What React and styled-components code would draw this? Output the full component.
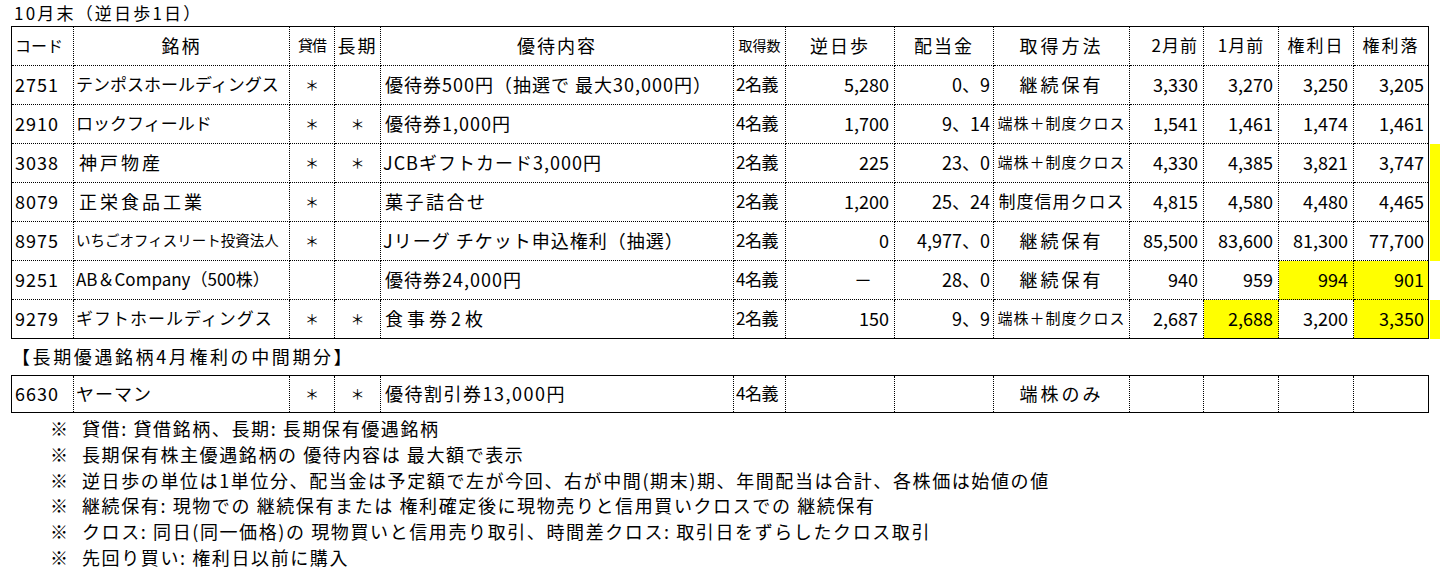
import React from "react";
import styled, { createGlobalStyle } from "styled-components";

const GlobalStyle = createGlobalStyle`
  body {
    margin: 0;
    background: #fff;
    color: #000;
    font-family: "Noto Sans CJK JP", "Noto Sans", sans-serif;
  }
`;

const YELLOW = "#ffff00";

// column widths measured from the sheet (incl. the dotted right border)
const cols = [
  { w: 62, a: "left", fs: 18, ls: 1, pl: 3 },
  { w: 216, a: "left", fs: 17, ls: 0, pl: 2 },
  { w: 45, a: "center", fs: 14, ls: 0 },
  { w: 46, a: "center", fs: 14, ls: 0 },
  { w: 353, a: "left", fs: 18, ls: 1, pl: 4 },
  { w: 52, a: "left", fs: 17, ls: -0.5, pl: 2 },
  { w: 109, a: "right", fs: 18, ls: 0, pr: 5 },
  { w: 99, a: "right", fs: 18, ls: 0, pr: 3 },
  { w: 136, a: "center", fs: 18, ls: 3 },
  { w: 74, a: "right", fs: 18, ls: 0, pr: 5 },
  { w: 75, a: "right", fs: 18, ls: 0, pr: 5 },
  { w: 75, a: "right", fs: 18, ls: 0, pr: 5 },
  { w: 74, a: "right", fs: 18, ls: 0, pr: 4 },
];

const header = [
  { t: "コード", fs: 16, ls: 0 },
  { t: "銘柄", a: "center", fs: 18, ls: 2 },
  { t: "貸借", fs: 15, ls: -1 },
  { t: "長期", fs: 18, ls: 2 },
  { t: "優待内容", a: "center", fs: 18, ls: 2 },
  { t: "取得数", fs: 14, ls: 0 },
  { t: "逆日歩", a: "center", fs: 18, ls: 2 },
  { t: "配当金", a: "center", fs: 18, ls: 2 },
  { t: "取得方法", fs: 18, ls: 3 },
  { t: "2月前", fs: 17, ls: 1 },
  { t: "1月前", a: "center", fs: 17, ls: 1 },
  { t: "権利日", a: "center", fs: 17, ls: 2 },
  { t: "権利落", a: "center", fs: 17, ls: 2 },
];

const cross = { t: "端株＋制度クロス", fs: 15, ls: 1 };
const keep = "継続保有";
const y = (t) => ({ t, bg: YELLOW });

const rows = [
  {
    side: false,
    cells: ["2751", "テンポスホールディングス", "＊", "", "優待券500円（抽選で 最大30,000円）", "2名義", "5,280", "0、9", keep, "3,330", "3,270", "3,250", "3,205"],
  },
  {
    side: false,
    cells: ["2910", "ロックフィールド", "＊", "＊", "優待券1,000円", "4名義", "1,700", "9、14", cross, "1,541", "1,461", "1,474", "1,461"],
  },
  {
    side: true,
    cells: ["3038", { t: "神戸物産", fs: 18, ls: 3, pl: 5 }, "＊", "＊", { t: "JCBギフトカード3,000円", pl: 2 }, "2名義", "225", "23、0", cross, "4,330", "4,385", "3,821", "3,747"],
  },
  {
    side: true,
    cells: ["8079", { t: "正栄食品工業", fs: 18, ls: 3, pl: 5 }, "＊", "", { t: "菓子詰合せ", ls: 2.5 }, "2名義", "1,200", "25、24", { t: "制度信用クロス", fs: 17, ls: 1 }, "4,815", "4,580", "4,480", "4,465"],
  },
  {
    side: true,
    cells: ["8975", { t: "いちごオフィスリート投資法人", fs: 14.5, ls: 0 }, "＊", "", { t: "Jリーグ チケット申込権利（抽選）", pl: 2 }, "2名義", "0", "4,977、0", keep, "85,500", "83,600", "81,300", "77,700"],
  },
  {
    side: false,
    cells: ["9251", { t: "AB＆Company（500株）", fs: 17, ls: 0 }, "", "", "優待券24,000円", "4名義", { t: "－", pr: 22 }, "28、0", keep, "940", "959", y("994"), y("901")],
  },
  {
    side: true,
    cells: ["9279", { t: "ギフトホールディングス", fs: 17, ls: 1 }, "＊", "＊", { t: "食事券2枚", ls: 4 }, "2名義", "150", "9、9", cross, "2,687", y("2,688"), "3,200", y("3,350")],
  },
];

const extra = ["6630", { t: "ヤーマン", fs: 18, ls: 1 }, "＊", "＊", { t: "優待割引券13,000円", ls: 1.5 }, "4名義", "", "", { t: "端株のみ", ls: 3 }, "", "", "", ""];

const notes = [
  "貸借: 貸借銘柄、長期: 長期保有優遇銘柄",
  "長期保有株主優遇銘柄の 優待内容は 最大額で表示",
  "逆日歩の単位は1単位分、配当金は予定額で左が今回、右が中間(期末)期、年間配当は合計、各株価は始値の値",
  "継続保有: 現物での 継続保有または 権利確定後に現物売りと信用買いクロスでの 継続保有",
  "クロス: 同日(同一価格)の 現物買いと信用売り取引、時間差クロス: 取引日をずらしたクロス取引",
  "先回り買い: 権利日以前に購入",
];

const Page = styled.div`
  width: 1440px;
  height: 587px;
  overflow: hidden;
`;

const Title = styled.div`
  height: 26px;
  display: flex;
  align-items: center;
  padding: 0 0 2px 14px;
  box-sizing: border-box;
  font-size: 17px;
  letter-spacing: 2.2px;
`;

const SheetRow = styled.div`
  display: flex;
  align-items: flex-start;
  padding-left: 11px;
`;

const Sheet = styled.div`
  display: grid;
  grid-template-columns: ${cols.map((c) => c.w + "px").join(" ")};
  border: 1px solid #000;
`;

const Cell = styled.div`
  box-sizing: border-box;
  height: ${(p) => p.$h}px;
  display: flex;
  align-items: center;
  justify-content: ${(p) =>
    p.$a === "right" ? "flex-end" : p.$a === "center" ? "center" : "flex-start"};
  padding: 0 ${(p) => p.$pr || 0}px 3px ${(p) => p.$pl || 0}px;
  font-size: ${(p) => p.$fs}px;
  letter-spacing: ${(p) => p.$ls}px;
  background: ${(p) => p.$bg || "transparent"};
  border-right: ${(p) => (p.$lastCol ? "none" : "1px dotted #000")};
  border-bottom: ${(p) => (p.$lastRow ? "none" : "1px dotted #000")};
  white-space: nowrap;
  overflow: hidden;
`;

const Strip = styled.div`
  display: flex;
  flex-direction: column;
  width: 10px;
  margin-left: 1px;
  padding-top: 1px;
`;

const StripPart = styled.div`
  height: ${(p) => p.$h}px;
  background: ${(p) => (p.$on ? YELLOW : "transparent")};
`;

const Section = styled.div`
  height: 36px;
  display: flex;
  align-items: center;
  padding: 0 0 3px 12px;
  box-sizing: border-box;
  font-size: 18px;
  letter-spacing: 2.6px;
`;

const Notes = styled.div`
  padding: 2px 0 0 50px;
`;

const Note = styled.div`
  display: flex;
  height: 25.8px;
  align-items: center;
  font-size: 18px;
  letter-spacing: 1.6px;
  white-space: nowrap;
`;

const Mark = styled.span`
  width: 32px;
  flex: none;
`;

function renderRow(cells, rowIdx, { h, lastRow }) {
  return cells.map((raw, i) => {
    const c = typeof raw === "string" ? { t: raw } : raw;
    const col = cols[i];
    return (
      <Cell
        key={rowIdx + "-" + i}
        $h={h}
        $a={c.a || col.a}
        $fs={c.fs ?? col.fs}
        $ls={c.ls ?? col.ls}
        $pl={c.pl ?? col.pl}
        $pr={c.pr ?? col.pr}
        $bg={c.bg}
        $lastCol={i === cols.length - 1}
        $lastRow={lastRow}
      >
        {c.t}
      </Cell>
    );
  });
}

export default function App() {
  const headerCells = header.map((hd, i) => ({
    ...hd,
    pl: i === 0 ? 3 : 0,
    pr: i === 9 ? 5 : 0,
    a: hd.a || (i === 0 ? "left" : i === 9 ? "right" : "center"),
  }));

  return (
    <Page>
      <GlobalStyle />
      <Title>10月末（逆日歩1日）</Title>

      <SheetRow>
        <Sheet>
          {renderRow(headerCells, "h", { h: 39, lastRow: false })}
          {rows.map((r, ri) =>
            renderRow(r.cells, ri, {
              h: ri === rows.length - 1 ? 38 : 39,
              lastRow: ri === rows.length - 1,
            })
          )}
        </Sheet>
        <Strip>
          <StripPart $h={39} />
          {rows.map((r, ri) => (
            <StripPart key={ri} $h={39} $on={r.side} />
          ))}
        </Strip>
      </SheetRow>

      <Section>【長期優遇銘柄4月権利の中間期分】</Section>

      <SheetRow>
        <Sheet>{renderRow(extra, "x", { h: 36, lastRow: true })}</Sheet>
      </SheetRow>

      <Notes>
        {notes.map((n) => (
          <Note key={n}>
            <Mark>※</Mark>
            {n}
          </Note>
        ))}
      </Notes>
    </Page>
  );
}
